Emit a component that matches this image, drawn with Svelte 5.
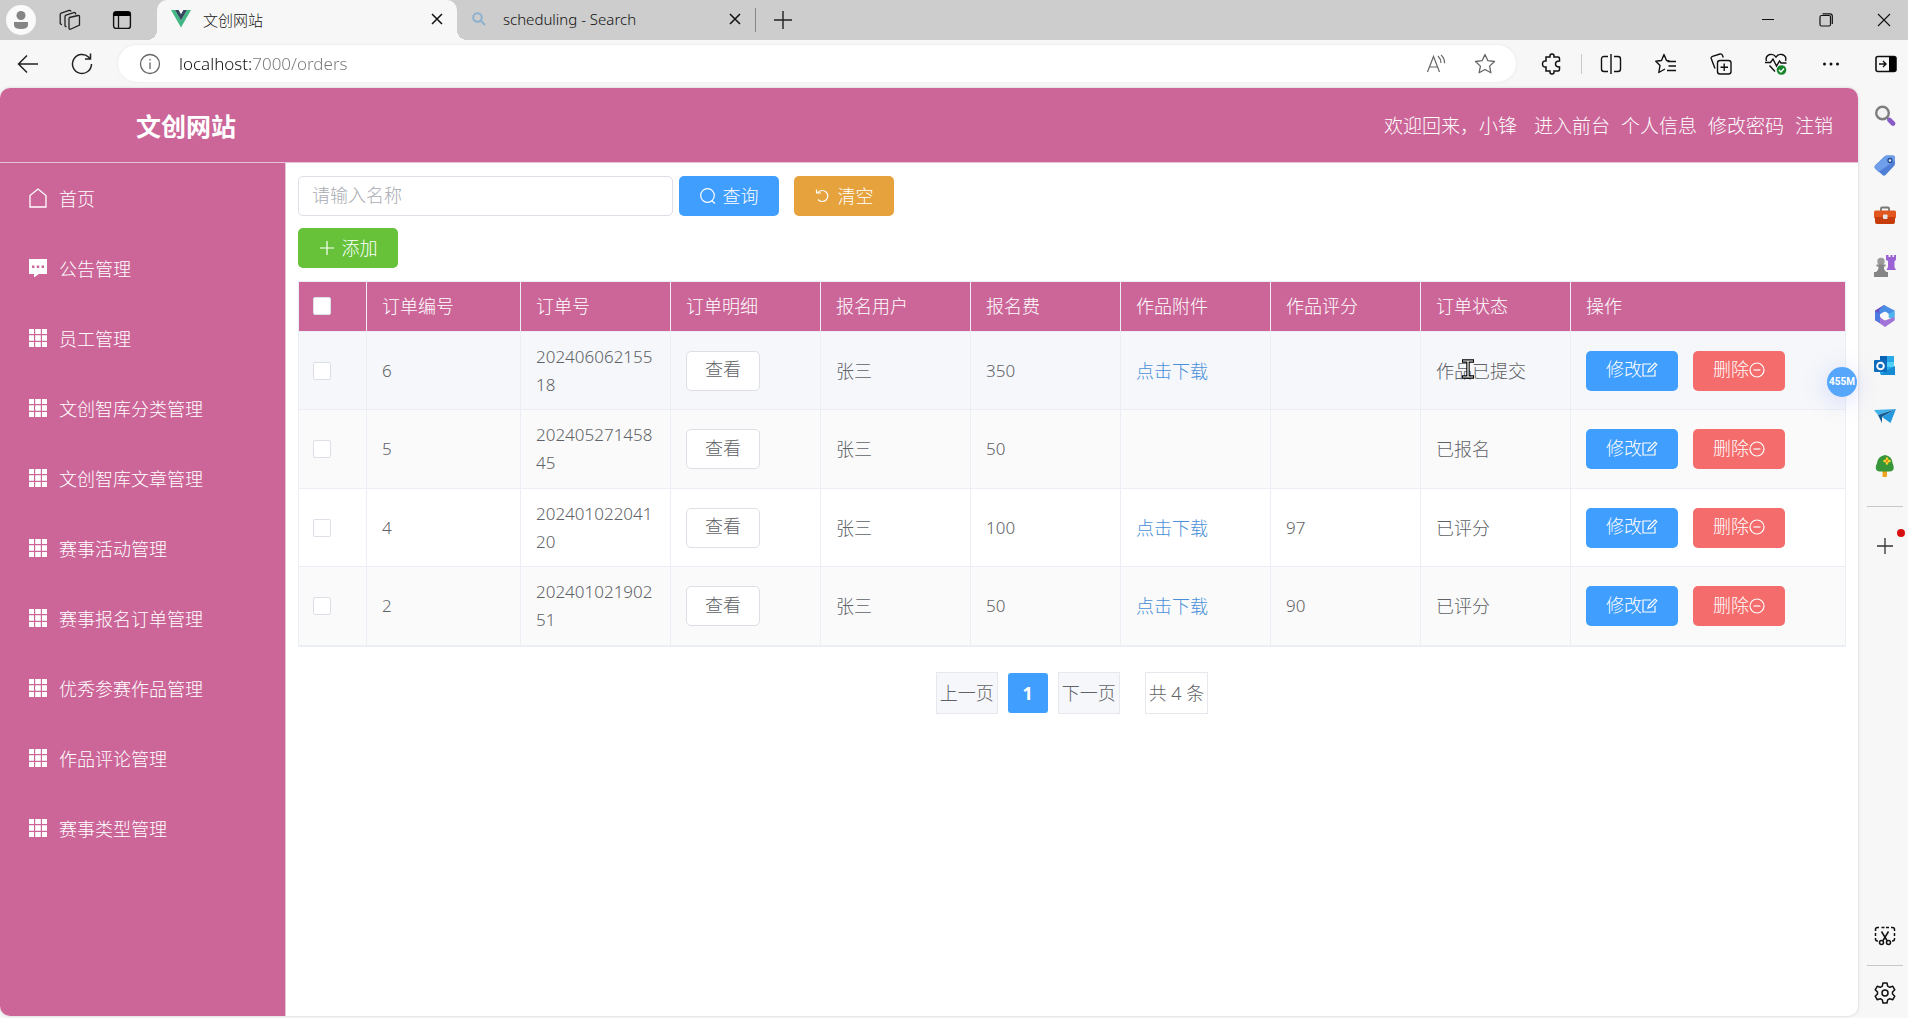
<script lang="ts">
	const menu = [
		{ name: "首页", icon: "home" },
		{ name: "公告管理", icon: "chat" },
		{ name: "员工管理", icon: "grid" },
		{ name: "文创智库分类管理", icon: "grid" },
		{ name: "文创智库文章管理", icon: "grid" },
		{ name: "赛事活动管理", icon: "grid" },
		{ name: "赛事报名订单管理", icon: "grid" },
		{ name: "优秀参赛作品管理", icon: "grid" },
		{ name: "作品评论管理", icon: "grid" },
		{ name: "赛事类型管理", icon: "grid" },
	]

	const columns = ["订单编号", "订单号", "订单明细", "报名用户", "报名费", "作品附件", "作品评分", "订单状态", "操作"]

	const orders = [
		{ id: 6, no: "20240606215518", user: "张三", fee: 350, file: true, score: "", status: "作品已提交" },
		{ id: 5, no: "20240527145845", user: "张三", fee: 50, file: false, score: "", status: "已报名" },
		{ id: 4, no: "20240102204120", user: "张三", fee: 100, file: true, score: "97", status: "已评分" },
		{ id: 2, no: "20240102190251", user: "张三", fee: 50, file: true, score: "90", status: "已评分" },
	]

	const railItems = ["search", "tag", "tools", "games", "office", "outlook", "plane", "tree"]

	let name = $state("")
	let checked = $state([])
	let url = $state("localhost:7000/orders")

	function toggleAll(e) {
		checked = e.currentTarget.checked ? orders.map((o) => o.id) : []
	}
</script>

{#snippet closeIcon()}
	<svg width="12" height="12" viewBox="0 0 12 12" fill="none" stroke="#111" stroke-width="1.5">
		<path d="M1 1l10 10M11 1L1 11" />
	</svg>
{/snippet}

{#snippet menuIcon(icon)}
	<svg width="18" height="20" viewBox="0 0 18 20">
		{#if icon === "home"}
			<path d="M1 19V7.5L9 1l8 6.5V19z" fill="none" stroke="#fff" stroke-width="1.3" />
		{:else if icon === "chat"}
			<path d="M0 1h18v15H10l-5 3.5V16H0z" fill="#fff" />
			<path d="M3 7.500h2.400v2.400H3zM7.800 7.500h2.400v2.400H7.800zM12.600 7.500H15v2.400h-2.400z" fill="#cc6699" />
		{:else}
			<path
				d="M0 1h5v5H0zM6.200 1h5.600v5H6.200zM13 1h5v5h-5zM0 7.200h5v5.600H0zM6.200 7.200h5.600v5.600H6.200zM13 7.200h5v5.600h-5zM0 14h5v5H0zM6.200 14h5.600v5H6.200zM13 14h5v5h-5z"
				fill="#fff"
			/>
		{/if}
	</svg>
{/snippet}

{#snippet railIcon(icon)}
	<svg width="22" height="22" viewBox="0 0 22 22">
		{#if icon === "search"}
			<circle cx="8.500" cy="8" r="6.300" fill="#f3f3f5" stroke="#7d7d7d" stroke-width="2.400" />
			<path d="M13 12.500l2.500 2.500" stroke="#7d7d7d" stroke-width="2" />
			<path d="M15.500 15l3.500 3.500" stroke="#8a5cc7" stroke-width="4.600" stroke-linecap="round" />
		{:else if icon === "tag"}
			<path d="M10.500 1.500Q11.500.5 13 .5h6Q21 .5 21 2.500v6q0 1.500-1 2.500l-8.500 9q-1.500 1.500-3 0L1 13.500Q0 12 1 10.500z" fill="#4f7fd6" />
			<path d="M10.500 1.500Q11.500.5 13 .5h6Q21 .5 21 2.500v3L4.500 17 1 13.500Q0 12 1 10.500z" fill="#6f9eeb" />
			<circle cx="16" cy="5.500" r="2" fill="#dce8ff" stroke="#26498c" stroke-width="1.300" />
		{:else if icon === "tools"}
			<path d="M7 6V3.500q0-1 1-1h6q1 0 1 1V6" fill="none" stroke="#777" stroke-width="1.800" />
			<rect x="0" y="5.500" width="22" height="8" rx="1.500" fill="#e2561f" />
			<path d="M1 12h20v5q0 2-2 2H3q-2 0-2-2z" fill="#c63c0b" />
			<rect x="9" y="9.500" width="4.500" height="4.500" rx=".8" fill="#e3e3e3" />
		{:else if icon === "games"}
			<path d="M12 0h2.500v2h2V0h2v2h1.500V0H22v5l-1.500 1v6l1.500 3H12.500L14 12V6l-2-1z" fill="#9b63d3" />
			<circle cx="7" cy="6.500" r="3.700" fill="#9a9a9a" />
			<path d="M2.500 9.500h9v2H9.800q0 4 2.700 5.500h1.500V22H0v-5h2q2.500-1.500 2.500-5.500h-2z" fill="#858585" />
		{:else if icon === "office"}
			<path d="M10 0L1 5.500V15l5 3V9l9-5.500z" fill="#6a4fc4" />
			<path d="M10 0l10.500 5.500v6L15 9l-4-2.500L6 9 5 5z" fill="#4a8ee6" />
			<path d="M20.500 5.500V15L11 11l4-2z" fill="#4fb4ec" />
			<path d="M1 15l5-3 5 3.500 9.500-3.500v3.500L11 22z" fill="#a273d8" />
			<path d="M1 6l5 2.500V18l-5-3z" fill="#4b7be0" />
			<circle cx="11" cy="11" r="3.800" fill="#fafafa" />
		{:else if icon === "outlook"}
			<path d="M6 1h14v18H6z" fill="#28a8e8" />
			<path d="M6 1h7v6H6z" fill="#0c62b5" />
			<path d="M13 7h7v5h-7z" fill="#50d0f8" />
			<path d="M6 20h15v-9l-8 4.500z" fill="#148bd2" />
			<rect x="0" y="5" width="13" height="12" rx="1" fill="#0f6cbd" />
			<circle cx="6.500" cy="11" r="3.300" fill="none" stroke="#fff" stroke-width="1.900" />
		{:else if icon === "plane"}
			<path d="M0 5l22-1L4 10z" fill="#42b2ea" />
			<path d="M4 10L22 4 8 12v6z" fill="#155a91" />
			<path d="M8 12L22 4l-5.500 14z" fill="#2498dc" />
		{:else}
			<rect x="8.500" y="14" width="4.500" height="8" rx="1" fill="#eba51d" />
			<path d="M11 0q7 1 7.500 8 3.500 8-3 8.500H6Q-.5 16 3 8q1-7 8-8z" fill="#379638" />
			<path d="M13 3.500v5M10.500 6h5" stroke="#f5cf2e" stroke-width="2.600" stroke-linecap="round" />
			<circle cx="13" cy="6" r="1.200" fill="#e0881b" />
		{/if}
	</svg>
{/snippet}

<div class="browser">
	<div class="tabs">
		<button class="avatar" aria-label="Profile">
			<svg width="30" height="30" viewBox="0 0 30 30">
				<circle cx="15" cy="15" r="15" fill="#fafafa" />
				<circle cx="15" cy="10.500" r="4.500" fill="#858585" />
				<path d="M8 17h14v3q0 4-7 4t-7-4z" fill="#858585" />
			</svg>
		</button>
		<button class="tool" aria-label="Workspaces">
			<svg width="22" height="22" viewBox="0 0 22 22" fill="none" stroke="#222" stroke-width="1.300">
				<path d="M10.500 8.500L19 6.500q1.500-.3 1.500 1v8.500L12 20q-2 .8-2-1V9.500z" />
				<path d="M7.500 17.500q-1.500.3-1.500-1V7.500q0-1 1-1.300L15.500 3.500q1.300 0 1.300 2" />
				<path d="M3 15.500q-1.800 0-1.800-1.500V5.500q0-1 1-1.300L10 1.500q1.500-.3 2 1" />
			</svg>
		</button>
		<button class="tool" aria-label="Tab actions">
			<svg width="20" height="20" viewBox="0 0 20 20">
				<rect x="1.600" y="1.600" width="16.800" height="16.800" rx="2.500" fill="none" stroke="#111" stroke-width="1.400" />
				<path d="M1.500 6V4q0-2.500 2.500-2.500h12q2.500 0 2.500 2.500v2z" />
				<path d="M6.500 6v12" stroke="#111" stroke-width="1.300" />
			</svg>
		</button>
		<div class="tab active">
			<svg width="20" height="18" viewBox="0 0 20 18">
				<path d="M0 0h4l6 10.500L16 0h4L10 17.500z" fill="#41b883" />
				<path d="M4 0h3.600L10 4.200 12.400 0H16l-6 10.500z" fill="#34495e" />
			</svg>
			<span>文创网站</span>
			<button aria-label="Close tab">{@render closeIcon()}</button>
		</div>
		<div class="tab">
			<svg width="20" height="14" viewBox="0 0 20 14" fill="none" stroke="#8cb0cf" stroke-width="2">
				<circle cx="6.500" cy="5.500" r="4.300" />
				<path d="M9.500 8.500l4.500 4.500" />
			</svg>
			<span>scheduling - Search</span>
			<button aria-label="Close tab">{@render closeIcon()}</button>
		</div>
		<button class="new-tab" aria-label="New tab">
			<svg width="18" height="18" viewBox="0 0 18 18" stroke="#222" stroke-width="1.400"><path d="M9 0v18M0 9h18" /></svg>
		</button>
		<div class="window">
			<button aria-label="Minimize">
				<svg width="14" height="14" viewBox="0 0 14 14" stroke="#111"><path d="M1 6.500h12" /></svg>
			</button>
			<button aria-label="Restore">
				<svg width="14" height="14" viewBox="0 0 14 14" fill="none" stroke="#111" stroke-width="1.200">
					<rect x="1" y="2.500" width="10.500" height="10.500" rx="1.500" />
					<path d="M3.500.8H11q2.300 0 2.300 2.300v8" />
				</svg>
			</button>
			<button aria-label="Close">
				<svg width="14" height="14" viewBox="0 0 14 14" stroke="#111" stroke-width="1.100"><path d="M1 1l12 12M13 1L1 13" /></svg>
			</button>
		</div>
	</div>

	<div class="toolbar">
		<button class="tool" aria-label="Back">
			<svg width="22" height="20" viewBox="0 0 22 20" fill="none" stroke="#222" stroke-width="1.500"><path d="M21 10H1.500M10 1.500L1.500 10l8.500 8.500" /></svg>
		</button>
		<button class="tool" aria-label="Refresh">
			<svg width="22" height="22" viewBox="0 0 22 22" fill="none" stroke="#222" stroke-width="1.500">
				<path d="M20.500 11A9.500 9.500 0 1 1 17.500 4l2 2M19.500 0.500V6H14" />
			</svg>
		</button>
		<div class="address">
			<svg width="22" height="22" viewBox="0 0 22 22" fill="none" stroke="#666" stroke-width="1.300">
				<circle cx="11" cy="11" r="9.500" />
				<path d="M11 9.500V16M11 6v1.600" />
			</svg>
			<input type="text" aria-label="Address" bind:value={url} />
			<button class="tool" aria-label="Read aloud">
				<svg width="20" height="20" viewBox="0 0 20 20" fill="none" stroke="#666" stroke-width="1.200">
					<path d="M1.500 18L7.500 2.500 13.500 18M3.500 13h8" />
					<path d="M12 2q3 3 3 7M15 .8q4 4 3.500 8.500" />
				</svg>
			</button>
			<button class="tool" aria-label="Favorite">
				<svg width="22" height="22" viewBox="0 0 22 22" fill="none" stroke="#666" stroke-width="1.300" stroke-linejoin="round">
					<path d="M11 1.500l2.900 6.200 6.600.8-4.900 4.600 1.300 6.700L11 16.500l-5.900 3.300 1.300-6.700L1.500 8.500l6.600-.8z" />
				</svg>
			</button>
		</div>
		<div class="actions">
			<button class="tool" aria-label="Extensions">
				<svg width="22" height="22" viewBox="0 0 22 22" fill="none" stroke="#111" stroke-width="1.500">
					<path d="M5 4h4q-.5-3 2-3t2 3h4q1.500 0 1.500 1.500V8q-4 0-4 3t4 3v2.500q0 1.500-1.500 1.500h-4q.5 3-2 3t-2-3H5V14q-3.500.5-3.500-3T5 8z" />
				</svg>
			</button>
			<span class="sep"></span>
			<button class="tool" aria-label="Split screen">
				<svg width="22" height="22" viewBox="0 0 22 22" fill="none" stroke="#111" stroke-width="1.400">
					<path d="M8 3.500H4Q1.500 3.500 1.500 6v10Q1.500 18.500 4 18.500h4M14 3.500h4q2.500 0 2.500 2.500v10q0 2.500-2.500 2.500h-4M11 1v20" />
				</svg>
			</button>
			<button class="tool" aria-label="Favorites">
				<svg width="22" height="22" viewBox="0 0 22 22" fill="none" stroke="#111" stroke-width="1.400" stroke-linejoin="round">
					<path d="M14.500 8L11.500 7.500 9 1.500 6.500 7.500.8 8.300 5 12.500 3.800 19.500 10 16M12.500 8.500H21M13.500 13H21M12 17.500H21" />
				</svg>
			</button>
			<button class="tool" aria-label="Collections">
				<svg width="22" height="22" viewBox="0 0 22 22" fill="none" stroke="#111" stroke-width="1.400">
					<rect x="7.500" y="7.500" width="13.500" height="13.500" rx="2.500" />
					<path d="M14.200 10.500v7.500M10.500 14.200H18M5 15.500L1.200 5.500Q.8 4 2.500 3.300L10 1q1.700-.4 2.300 1l1 2.500" />
				</svg>
			</button>
			<button class="tool" aria-label="Browser essentials">
				<svg width="22" height="22" viewBox="0 0 22 22" fill="none" stroke="#111" stroke-width="1.400">
					<path d="M1.500 8Q0 3 5 1.500q3.500-.8 6 2.500 2.500-3.300 6-2.500 5 1.500 3.500 6.500M0 9.500h5.500L8 6l3.500 7 3-5 1.500 2h5.500M4.500 12.500l5.500 6" />
					<circle cx="16.500" cy="17" r="4.800" fill="#17852b" stroke="none" />
					<path d="M14 17l2 2 3-3.500" stroke="#fff" />
				</svg>
			</button>
			<button class="tool" aria-label="Settings and more">
				<svg width="18" height="6" viewBox="0 0 18 6" fill="#111">
					<circle cx="2.500" cy="3" r="1.500" /><circle cx="9" cy="3" r="1.500" /><circle cx="15.500" cy="3" r="1.500" />
				</svg>
			</button>
			<button class="tool" aria-label="Sidebar">
				<svg width="22" height="18" viewBox="0 0 22 18">
					<rect x="1" y="1.500" width="20" height="15" rx="2" fill="none" stroke="#111" stroke-width="1.600" />
					<path d="M14 1.500h5q2 0 2 2v11q0 2-2 2h-5z" />
					<path d="M4 9h7M8 6l3 3-3 3" fill="none" stroke="#111" stroke-width="1.400" />
				</svg>
			</button>
		</div>
	</div>

	<div class="body">
		<div class="page">
			<header>
				<h1>文创网站</h1>
				<nav>
					<span>欢迎回来，小锋</span>
					<a href="/front">进入前台</a>
					<a href="/profile">个人信息</a>
					<a href="/password">修改密码</a>
					<a href="/logout">注销</a>
				</nav>
			</header>
			<div class="content">
				<aside>
					{#each menu as item}
						<a href="/">{@render menuIcon(item.icon)}{item.name}</a>
					{/each}
				</aside>
				<main>
					<div class="search">
						<input type="text" placeholder="请输入名称" aria-label="名称" bind:value={name} />
						<button class="btn primary">
							<svg width="16" height="18" viewBox="0 0 16 18" fill="none" stroke="#fff" stroke-width="1.200">
								<circle cx="7.500" cy="9.500" r="6.800" /><path d="M11.500 14.500l3.500 3" />
							</svg>
							查询
						</button>
						<button class="btn warning" onclick={() => (name = "")}>
							<svg width="16" height="18" viewBox="0 0 16 18" fill="none" stroke="#fff" stroke-width="1.200">
								<path d="M3 6.500a5.500 5.500 0 1 1 0 7M1.500 3.500V7H6" />
							</svg>
							清空
						</button>
					</div>
					<button class="btn success">
						<svg width="16" height="18" viewBox="0 0 16 18" stroke="#fff" stroke-width="1.200"><path d="M8 3v14M1 10h14" /></svg>
						添加
					</button>

					<table>
						<colgroup>
							<col class="c-check" />
							<col class="c-id" />
							{#each Array(7) as _}
								<col class="c-std" />
							{/each}
							<col />
						</colgroup>
						<thead>
							<tr>
								<th>
									<input type="checkbox" aria-label="全选" checked={checked.length === orders.length} onchange={toggleAll} />
								</th>
								{#each columns as c}
									<th>{c}</th>
								{/each}
							</tr>
						</thead>
						<tbody>
							{#each orders as o, i}
								<tr class:hover={i === 0}>
									<td><input type="checkbox" aria-label={o.no} value={o.id} bind:group={checked} /></td>
									<td class="num">{o.id}</td>
									<td class="num">{o.no}</td>
									<td><button class="btn plain">查看</button></td>
									<td>{o.user}</td>
									<td class="num">{o.fee}</td>
									<td>{#if o.file}<a href="/download">点击下载</a>{/if}</td>
									<td class="num">{o.score}</td>
									<td>
										<span class="status">
											{o.status}
											{#if i === 0}
												<svg class="cursor" width="12" height="20" viewBox="0 0 12 20" fill="none">
													<path d="M0 2h12M6 2v16M0 18h12" stroke="#000" stroke-width="3.400" />
													<path d="M1 2h10M6 2v16M1 18h10" stroke="#fff" stroke-width="1.200" />
												</svg>
											{/if}
										</span>
									</td>
									<td>
										<div class="ops">
											<button class="btn op primary">
												修改<svg width="16" height="18" viewBox="0 0 16 18" fill="none" stroke="#fff" stroke-width="1.200">
													<path d="M9 4H1v12h12v-6" /><path d="M6 12l1-3 6-6 1.800 1.800L9 11z" />
												</svg>
											</button>
											<button class="btn op danger">
												删除<svg width="16" height="18" viewBox="0 0 16 18" fill="none" stroke="#fff" stroke-width="1.200">
													<circle cx="8" cy="10" r="7" /><path d="M4.500 10h7" />
												</svg>
											</button>
										</div>
									</td>
								</tr>
							{/each}
						</tbody>
					</table>

					<div class="pager">
						<button>上一页</button>
						<button class="current">1</button>
						<button>下一页</button>
						<span>共 4 条</span>
					</div>
				</main>
			</div>
			<div class="memory">455M</div>
		</div>

		<div class="rail">
			{#each railItems as item}
				<button aria-label={item}>{@render railIcon(item)}</button>
			{/each}
			<hr />
			<button class="add" aria-label="Add">
				<svg width="16" height="16" viewBox="0 0 16 16" stroke="#333" stroke-width="1.300"><path d="M8 0v16M0 8h16" /></svg>
				<i></i>
			</button>
			<button class="low first" aria-label="Screenshot">
				<svg width="22" height="20" viewBox="0 0 22 20" fill="none" stroke="#111" stroke-width="1.500">
					<path d="M1.500 5V3.500q0-2 2-2H5M7.500 1.500h3M12 1.500h3M17 1.500h1.500q2 0 2 2V5M20.500 7v3M1.500 7v3M1.500 12v1q0 2 2 2H4M20.500 12v1q0 2-2 2H18" />
					<path d="M7.500 5.500l5.500 9M14.500 5.500L9 14.500" />
					<circle cx="7.500" cy="16.500" r="2" /><circle cx="14.500" cy="16.500" r="2" />
				</svg>
			</button>
			<hr />
			<button class="low" aria-label="Settings">
				<svg width="24" height="24" viewBox="0 0 24 24" fill="none" stroke="#111" stroke-width="1.500" stroke-linejoin="round">
					<circle cx="12" cy="12" r="3" />
					<path d="M10 2h4l.7 3.200 2 1.100 3.100-1 2 3.500L19.500 11v2l2.300 2.200-2 3.500-3.100-1-2 1.100L14 22h-4l-.7-3.200-2-1.100-3.100 1-2-3.500L4.500 13v-2L2.200 8.800l2-3.500 3.100 1 2-1.100z" />
				</svg>
			</button>
		</div>
	</div>
</div>

<style>
	:global(body) {
		background: #f7f7f7;
	}

	.browser {
		display: flex;
		flex-direction: column;
		min-height: 100vh;
		font-family: "Noto Sans", "Noto Sans CJK SC", sans-serif;
		font-size: 18px;
		font-weight: 300;
		color: #606266;
	}

	.browser *,
	.browser *::before,
	.browser *::after {
		box-sizing: border-box;
	}

	button {
		padding: 0;
		border: none;
		background: none;
		font: inherit;
		color: inherit;
		cursor: pointer;
	}

	input {
		font: inherit;
		min-width: 0;
	}

	svg {
		display: block;
		flex: none;
	}

	a {
		text-decoration: none;
	}

	.tabs {
		display: flex;
		align-items: center;
		height: 40px;
		padding-left: 6px;
		background: #cdcdcd;
	}

	.tool {
		display: flex;
		align-items: center;
		justify-content: center;
		width: 36px;
		height: 36px;
	}

	.tabs > .tool {
		margin-left: 16px;
	}

	.tab {
		position: relative;
		display: flex;
		align-items: center;
		gap: 12px;
		width: 298px;
		height: 40px;
		padding: 0 8px 2px 14px;
		font-size: 15px;
		color: #111;
	}

	.tab span {
		flex: 1;
	}

	.tab button {
		padding: 6px;
	}

	.tab.active {
		width: 300px;
		margin-left: 17px;
		background: #f7f7f7;
		border-radius: 10px 10px 0 0;
	}

	.tab.active::before,
	.tab.active::after {
		content: "";
		position: absolute;
		bottom: 0;
		width: 10px;
		height: 10px;
	}

	.tab.active::before {
		right: 100%;
		background: radial-gradient(circle at 0 0, transparent 10px, #f7f7f7 10px);
	}

	.tab.active::after {
		left: 100%;
		background: radial-gradient(circle at 100% 0, transparent 10px, #f7f7f7 10px);
	}

	.new-tab {
		height: 24px;
		padding: 0 18px;
		border-left: 1px solid #888;
	}

	.window {
		display: flex;
		gap: 10px;
		margin-left: auto;
	}

	.window button {
		display: flex;
		align-items: center;
		justify-content: center;
		width: 48px;
		height: 40px;
	}

	.toolbar {
		display: flex;
		align-items: center;
		gap: 18px;
		height: 48px;
		padding: 0 4px 1px 10px;
		background: #f7f7f7;
	}

	.address {
		display: flex;
		flex: 1;
		align-items: center;
		height: 37px;
		padding: 0 13px 0 21px;
		border-radius: 19px;
		background: #fff;
		box-shadow: 0 0 3px #e4e4e4;
	}

	.address input {
		flex: 1;
		padding: 0;
		margin-left: 18px;
		border: none;
		outline: none;
		font-size: 17px;
		/* host is dark, the rest of the url is dimmed */
		background: linear-gradient(90deg, #111 72px, #777 72px);
		background-clip: text;
		color: transparent;
	}

	.address .tool + .tool {
		margin-left: 13px;
	}

	.actions {
		display: flex;
		align-items: center;
		gap: 19px;
	}

	.sep {
		width: 1px;
		height: 20px;
		margin: 0 -8px;
		background: #c8c8c8;
	}

	.body {
		display: flex;
		flex: 1;
	}

	.page {
		position: relative;
		display: flex;
		flex: 1;
		flex-direction: column;
		min-width: 0;
		margin-bottom: 2px;
		border-radius: 10px;
		background: #fff;
		box-shadow: 0 0 3px #ccc;
	}

	header {
		display: flex;
		align-items: center;
		justify-content: space-between;
		height: 75px;
		padding: 0 25px 0 136px;
		border-bottom: 1px solid #e6c4d6;
		border-radius: 10px 10px 0 0;
		background: #cc6699;
		color: #fff;
	}

	h1 {
		margin: 0;
		font-size: 25px;
		font-weight: 700;
	}

	nav {
		display: flex;
		gap: 11px;
		font-size: 19px;
	}

	nav span {
		margin-right: 6px;
	}

	nav a {
		color: #fff;
	}

	.content {
		display: flex;
		flex: 1;
	}

	aside {
		flex: none;
		width: 286px;
		border-right: 1px solid #e6c4d6;
		border-radius: 0 0 0 10px;
		background: #cc6699;
	}

	aside a {
		display: flex;
		align-items: center;
		gap: 12px;
		height: 70px;
		padding-left: 29px;
		color: #fff;
	}

	main {
		flex: 1;
		min-width: 0;
		padding: 13px 12px;
	}

	.search {
		display: flex;
		margin-bottom: 12px;
	}

	.search input {
		width: 375px;
		height: 40px;
		margin-right: 6px;
		padding: 0 13px 2px;
		border: 1px solid #dcdfe6;
		border-radius: 5px;
	}

	.search input::placeholder {
		color: #a8abb2;
	}

	.btn {
		display: flex;
		align-items: center;
		justify-content: center;
		gap: 7px;
		width: 100px;
		height: 40px;
		padding-bottom: 3px;
		border-radius: 5px;
		color: #fff;
	}

	.primary {
		background: #409eff;
	}

	.warning {
		margin-left: 15px;
		background: #e6a23c;
	}

	.success {
		background: #67c23a;
	}

	.danger {
		background: #f56c6c;
	}

	.plain {
		width: 74px;
		border: 1px solid #dcdfe6;
		background: #fff;
		color: #606266;
	}

	.op {
		gap: 0;
		width: 92px;
	}

	.ops {
		display: flex;
		gap: 15px;
	}

	table {
		width: 100%;
		margin-top: 13px;
		table-layout: fixed;
		border-collapse: separate;
		border-spacing: 0;
		border: 1px solid #ebeef5;
		border-right-width: 0;
	}

	.c-check {
		width: 68px;
	}

	.c-id {
		width: 154px;
	}

	.c-std {
		width: 150px;
	}

	th,
	td {
		height: 78px;
		padding: 0 14px 0 15px;
		border-right: 1px solid #ebeef5;
		border-bottom: 1px solid #ebeef5;
		font-weight: inherit;
		line-height: 28px;
		text-align: left;
		word-break: break-all;
	}

	th {
		height: 50px;
		padding-bottom: 2px;
		background: #cc6699;
		color: #fff;
	}

	th:first-child,
	td:first-child {
		padding-left: 14px;
	}

	tr:nth-child(even) td {
		height: 79px;
		background: #fafafa;
	}

	tr.hover td {
		background: #f5f7fa;
	}

	.num {
		font-size: 17px;
	}

	td a {
		color: #4a90d9;
	}

	input[type="checkbox"] {
		display: block;
		appearance: none;
		width: 18px;
		height: 18px;
		margin: 0;
		border: 1px solid #dcdfe6;
		border-radius: 2px;
		background: #fff;
	}

	input[type="checkbox"]:checked {
		border-color: #409eff;
		background: #409eff;
	}

	.status {
		position: relative;
	}

	.cursor {
		position: absolute;
		left: 26px;
		top: 0;
	}

	.pager {
		display: flex;
		align-items: center;
		justify-content: center;
		gap: 10px;
		margin-top: 25px;
	}

	.pager button,
	.pager span {
		height: 42px;
		padding: 0 3px;
		border: 1px solid #e6e8ee;
		background: #f5f7fa;
		line-height: 40px;
	}

	.pager .current {
		width: 40px;
		height: 40px;
		border: none;
		border-radius: 3px;
		background: #409eff;
		color: #fff;
		font-weight: 700;
	}

	.pager span {
		margin-left: 15px;
		background: #fff;
	}

	.memory {
		position: absolute;
		right: 1px;
		top: 279px;
		width: 30px;
		height: 30px;
		border-radius: 50%;
		background: #56a6fb;
		box-shadow: 0 4px 24px rgba(110, 120, 255, 0.25);
		color: #fff;
		font-family: Roboto, sans-serif;
		font-size: 10px;
		font-weight: 700;
		line-height: 30px;
		text-align: center;
	}

	.rail {
		display: flex;
		flex: none;
		flex-direction: column;
		align-items: center;
		width: 50px;
		padding: 3px 0 3px 4px;
	}

	.rail button {
		position: relative;
		display: flex;
		align-items: center;
		justify-content: center;
		width: 46px;
		height: 50px;
	}

	.rail hr {
		width: 36px;
		height: 1px;
		margin: 15px 0 14px;
		border: none;
		background: #c8c8c8;
	}

	.rail .low {
		height: 44px;
	}

	.rail .first {
		margin-top: auto;
	}

	.rail .first + hr {
		margin: 7px 0 5px;
	}

	.add i {
		position: absolute;
		right: 3px;
		top: 8px;
		width: 8px;
		height: 8px;
		border-radius: 50%;
		background: #d80f0f;
	}
</style>
